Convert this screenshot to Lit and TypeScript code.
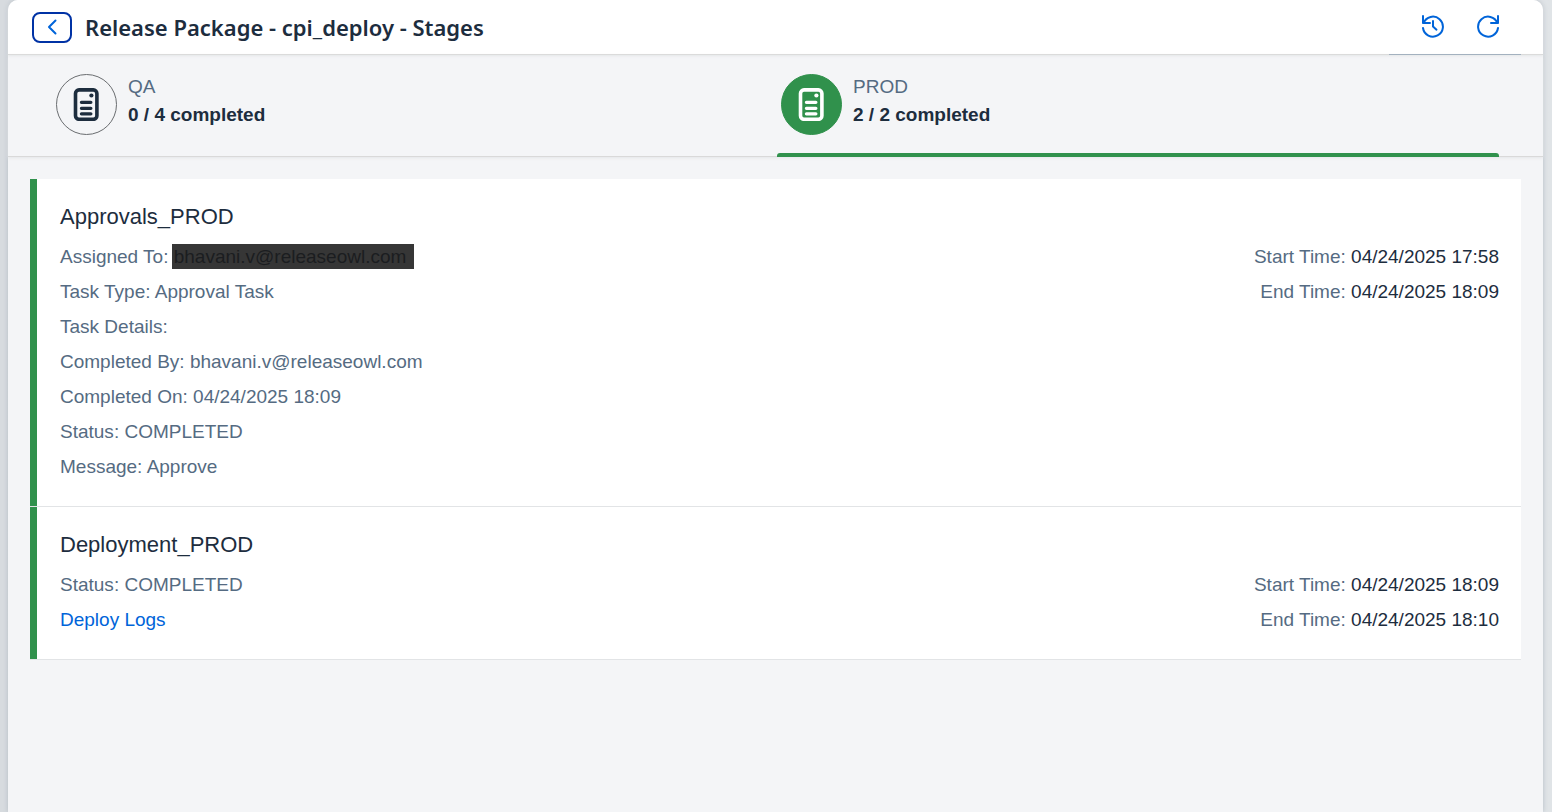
import { LitElement, html, css, svg, nothing } from "lit";
import { customElement, property, state } from "lit/decorators.js";
import { classMap } from "lit/directives/class-map.js";

interface Task {
  name: string;
  details: { label: string; value: string; redacted?: boolean }[];
  link?: string;
  start: string;
  end: string;
}

interface Stage {
  name: string;
  done: number;
  total: number;
}

const STAGES: Stage[] = [
  { name: "QA", done: 0, total: 4 },
  { name: "PROD", done: 2, total: 2 },
];

const TASKS: Task[] = [
  {
    name: "Approvals_PROD",
    details: [
      { label: "Assigned To", value: "bhavani.v@releaseowl.com", redacted: true },
      { label: "Task Type", value: "Approval Task" },
      { label: "Task Details", value: "" },
      { label: "Completed By", value: "bhavani.v@releaseowl.com" },
      { label: "Completed On", value: "04/24/2025 18:09" },
      { label: "Status", value: "COMPLETED" },
      { label: "Message", value: "Approve" },
    ],
    start: "04/24/2025 17:58",
    end: "04/24/2025 18:09",
  },
  {
    name: "Deployment_PROD",
    details: [{ label: "Status", value: "COMPLETED" }],
    link: "Deploy Logs",
    start: "04/24/2025 18:09",
    end: "04/24/2025 18:10",
  },
];

const backIcon = svg`<svg width="24" height="24" viewBox="0 0 24 24" fill="none" stroke="currentColor" stroke-width="2" stroke-linecap="round" stroke-linejoin="round" aria-hidden="true"><path d="M15.500 5.500 9 12l6.500 6.500"/></svg>`;

const historyIcon = svg`<svg width="24" height="24" viewBox="0 0 24 24" fill="none" stroke="currentColor" stroke-width="2" stroke-linecap="round" stroke-linejoin="round" aria-hidden="true"><path d="M2 2v7h7"/><path d="M2.600 9A10 10 0 1 1 2 14"/><path d="M12 7v5.500l3.500 3.200"/></svg>`;

const refreshIcon = svg`<svg width="24" height="24" viewBox="0 0 24 24" fill="none" stroke="currentColor" stroke-width="2" stroke-linecap="round" stroke-linejoin="round" aria-hidden="true"><path d="M22 2v7h-7"/><path d="M21.400 9A10 10 0 1 0 22 14"/></svg>`;

const documentIcon = svg`<svg width="27" height="33" viewBox="-0.600 0 27 33" fill="none" stroke="currentColor" stroke-linecap="round" aria-hidden="true"><rect x="1.900" y="1.900" width="21.400" height="29.400" rx="3.500" stroke-width="3.600"/><circle cx="17.800" cy="7.500" r="2.100" fill="currentColor" stroke="none"/><path d="M7.800 14.300h9.500M7.800 20.300h9.500M7.800 25.800h9.500" stroke-width="3.200"/></svg>`;

@customElement("stage-tab")
class StageTab extends LitElement {
  @property({ attribute: false }) stage!: Stage;
  @property({ type: Boolean }) active = false;

  static styles = css`
    :host {
      display: flex;
    }
    .tab {
      position: relative;
      flex: 1;
      display: flex;
      gap: 11px;
      align-items: flex-start;
      padding: 19px 4px 21px;
      border: 0;
      background: none;
      color: #1d2d3e;
      font: inherit;
      text-align: left;
      cursor: pointer;
    }
    .tab.active::after {
      content: "";
      position: absolute;
      inset: auto 0 -1px;
      height: 4px;
      border-radius: 3px 3px 0 0;
      background: #30914c;
    }
    .badge {
      display: grid;
      place-items: center;
      box-sizing: border-box;
      width: 61px;
      height: 61px;
      border: 1px solid #6a6d70;
      border-radius: 50%;
    }
    .active .badge {
      border-color: #30914c;
      background: #30914c;
      color: #fff;
    }
    .text {
      display: flex;
      flex-direction: column;
      gap: 2px;
      line-height: 26px;
    }
    .name {
      color: #556b82;
    }
    .count {
      font-weight: 700;
    }
  `;

  render() {
    const { name, done, total } = this.stage;
    return html`<button
      class=${classMap({ tab: true, active: this.active })}
      type="button"
      aria-pressed=${this.active}
    >
      <span class="badge">${documentIcon}</span>
      <span class="text">
        <span class="name">${name}</span>
        <span class="count">${done} / ${total} completed</span>
      </span>
    </button>`;
  }
}

@customElement("task-item")
class TaskItem extends LitElement {
  @property({ attribute: false }) task!: Task;

  static styles = css`
    :host {
      display: block;
      border-bottom: 1px solid #e2e4e6;
      background: #fff;
    }
    .item {
      border-left: 7px solid #30914c;
      padding: 24px 22px 22px 23px;
    }
    .title {
      margin: 0 0 8px;
      color: #1d2d3e;
      font-size: 22px;
      font-weight: 400;
      line-height: 28px;
    }
    .body {
      display: flex;
      justify-content: space-between;
      gap: 24px;
      color: #556b82;
      line-height: 35px;
    }
    .redacted {
      margin-left: -2px;
      padding: 2px 8px 2px 2px;
      background: #363636;
      color: #1b1d20;
    }
    .link {
      color: #0064d9;
      text-decoration: none;
    }
    .times {
      text-align: right;
    }
    .time {
      color: #1d2d3e;
    }
  `;

  render() {
    const t = this.task;
    return html`<article class="item">
      <h2 class="title">${t.name}</h2>
      <div class="body">
        <div>
          ${t.details.map(
            (d) => html`<div>
              ${d.label}: <span class=${classMap({ redacted: !!d.redacted })}>${d.value}</span>
            </div>`
          )}
          ${t.link ? html`<div><a class="link" href="#logs">${t.link}</a></div>` : nothing}
        </div>
        <div class="times">
          <div>Start Time: <span class="time">${t.start}</span></div>
          <div>End Time: <span class="time">${t.end}</span></div>
        </div>
      </div>
    </article>`;
  }
}

@customElement("app-root")
class AppRoot extends LitElement {
  @state() private selected = "PROD";

  static styles = css`
    :host {
      display: flex;
      box-sizing: border-box;
      min-height: 100vh;
      padding: 0 9px 0 8px;
      background: linear-gradient(90deg, #d7dbdf, #e0e4e7);
      font-family: "Liberation Sans", Arial, sans-serif;
      font-size: 19px;
    }
    .panel {
      flex: 1;
      display: flex;
      flex-direction: column;
      border-radius: 10px 10px 0 0;
      background: #f4f5f7;
      box-shadow: 0 0 5px #b4bcc4;
    }
    .header {
      display: flex;
      align-items: center;
      height: 54px;
      padding: 0 40px 0 24px;
      border-bottom: 1px solid #d9d9d9;
      border-radius: 10px 10px 0 0;
      background: #fff;
      box-shadow: 0 1px 3px #e4e6e8;
    }
    .back {
      display: grid;
      place-items: center;
      box-sizing: border-box;
      width: 40px;
      height: 31px;
      margin-right: 13px;
      padding: 0;
      border: 2px solid #0032a5;
      border-radius: 8px;
      background: #fff;
      color: #0064d9;
      cursor: pointer;
    }
    .heading {
      flex: 1;
      margin: 0;
      color: #1d2d3e;
      font-family: "Noto Sans", sans-serif;
      font-size: 22px;
      font-weight: 600;
      line-height: 28px;
    }
    .actions {
      position: relative;
      align-self: stretch;
      display: flex;
      align-items: center;
      gap: 25px;
      padding-bottom: 2px;
    }
    .actions::after {
      content: "";
      position: absolute;
      inset: auto -18px -1px -29px;
      height: 1px;
      background: #a3b1bf;
    }
    .action {
      display: grid;
      place-items: center;
      width: 30px;
      height: 30px;
      padding: 0;
      border: 0;
      background: none;
      color: #0064d9;
      cursor: pointer;
    }
    .tabs {
      display: grid;
      grid-template-columns: 1fr 1fr;
      gap: 3px;
      padding: 0 44px;
      border-bottom: 1px solid #d9d9d9;
      box-shadow: 0 1px 3px #e4e6e8;
    }
    .tasks {
      padding: 22px;
    }
  `;

  render() {
    return html`<main class="panel">
      <header class="header">
        <button class="back" type="button" aria-label="Back">${backIcon}</button>
        <h1 class="heading">Release Package - cpi_deploy - Stages</h1>
        <div class="actions">
          <button class="action" type="button" aria-label="History">${historyIcon}</button>
          <button class="action" type="button" aria-label="Refresh">${refreshIcon}</button>
        </div>
      </header>
      <nav class="tabs">
        ${STAGES.map(
          (s) => html`<stage-tab
            .stage=${s}
            ?active=${s.name === this.selected}
            @click=${() => (this.selected = s.name)}
          ></stage-tab>`
        )}
      </nav>
      <section class="tasks">
        ${TASKS.map((t) => html`<task-item .task=${t}></task-item>`)}
      </section>
    </main>`;
  }
}
